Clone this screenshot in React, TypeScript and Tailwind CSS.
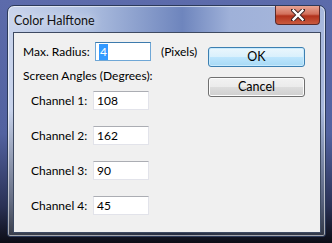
import React from 'react'

const font = { fontFamily: 'Lato, "Noto Sans", Arial, sans-serif' }

function TextBox({ value, selected, focused }: { value: string; selected?: boolean; focused?: boolean }) {
  return (
    <div
      className={`h-[19px] w-[56px] bg-white border flex items-center pl-[3px] text-[12px] leading-none ${
        focused ? 'border-[#6fa7d6] border-t-[#3d7bad]' : 'border-[#e2e3ea] border-t-[#abadb3]'
      }`}
    >
      {selected ? <span className="bg-[#3399ff] text-white px-[1px] py-[2px]">{value}</span> : <span>{value}</span>}
    </div>
  )
}

function Channel({ n, value }: { n: number; value: string }) {
  return (
    <div className="flex items-center h-[19px] pl-[8px]">
      <span className="w-[62px] text-[12px]">Channel {n}:</span>
      <TextBox value={value} />
    </div>
  )
}

export default function App() {
  return (
    <div
      className="w-[332px] h-[243px] overflow-hidden pt-[5px] pl-[7px] bg-[linear-gradient(180deg,#5c6bab_0%,#5262a0_55%,#2a3155_85%,#0c0d16_100%)]"
      style={font}
    >
      {/* window frame */}
      <div className="w-[319px] h-[232px] rounded-t-[7px] rounded-b-[3px] border border-[#2c3a5a] bg-[linear-gradient(180deg,rgba(0,0,0,0)_0%,rgba(0,0,0,0)_45%,rgba(20,25,45,0.55)_85%,rgba(10,12,20,0.75)_100%),linear-gradient(90deg,#c9d4ec_0%,#aebfe0_25%,#6e85bd_55%,#9fb1d9_70%,#a8b8dc_100%)] flex flex-col shadow-[inset_0_0_0_1px_rgba(255,255,255,0.55)]">
        {/* title bar */}
        <div className="h-[26px] flex items-start justify-between shrink-0">
          <span className="pl-[6px] pt-[9px] text-[12.5px] leading-none text-[#111] [text-shadow:0_0_8px_rgba(255,255,255,0.9)]">
            Color Halftone
          </span>
          <div className="mr-[5px] w-[45px] h-[19px] rounded-b-[4px] border border-t-0 border-[#5a2a2a] bg-[linear-gradient(180deg,#e8a493_0%,#d2705c_45%,#b2321c_55%,#c95a3e_100%)] flex items-center justify-center">
            <svg width="14" height="12" viewBox="0 0 14 12">
              <path d="M2 1 L12 11 M12 1 L2 11" stroke="#3a2020" strokeWidth="4.2" strokeLinecap="square" />
              <path d="M2.5 1.5 L11.5 10.5 M11.5 1.5 L2.5 10.5" stroke="#ffffff" strokeWidth="2.4" strokeLinecap="square" />
            </svg>
          </div>
        </div>

        {/* client area */}
        <div className="ml-[5px] mr-[4px] mb-[3px] flex-1 border border-[#3e4a62] bg-[#f0f0f0] flex text-[12px] text-black">
          <div className="w-[194px] pl-[9px] pt-[9px] flex flex-col">
            <div className="flex items-center h-[19px]">
              <span className="w-[72px]">Max. Radius:</span>
              <TextBox value="4" selected focused />
              <span className="ml-[10px]">(Pixels)</span>
            </div>
            <div className="mt-[7px] h-[16px] leading-[16px]">Screen Angles (Degrees):</div>
            <div className="mt-[7px] flex flex-col gap-[16px]">
              <Channel n={1} value="108" />
              <Channel n={2} value="162" />
              <Channel n={3} value="90" />
              <Channel n={4} value="45" />
            </div>
          </div>
          <div className="pt-[14px] flex flex-col gap-[10px]">
            <button className="w-[97px] h-[20px] rounded-[3px] border border-[#3c7fb1] bg-[linear-gradient(180deg,#eaf6fd_0%,#d9f0fc_50%,#bee6fd_50%,#a7d9f5_100%)] shadow-[inset_0_0_0_1px_#c8eafd] text-[12.5px] leading-none">
              OK
            </button>
            <button className="w-[97px] h-[20px] rounded-[3px] border border-[#707070] bg-[linear-gradient(180deg,#f2f2f2_0%,#ebebeb_50%,#dddddd_50%,#cfcfcf_100%)] shadow-[inset_0_0_0_1px_#fcfcfc] text-[12.5px] leading-none">
              Cancel
            </button>
          </div>
        </div>
      </div>
    </div>
  )
}
